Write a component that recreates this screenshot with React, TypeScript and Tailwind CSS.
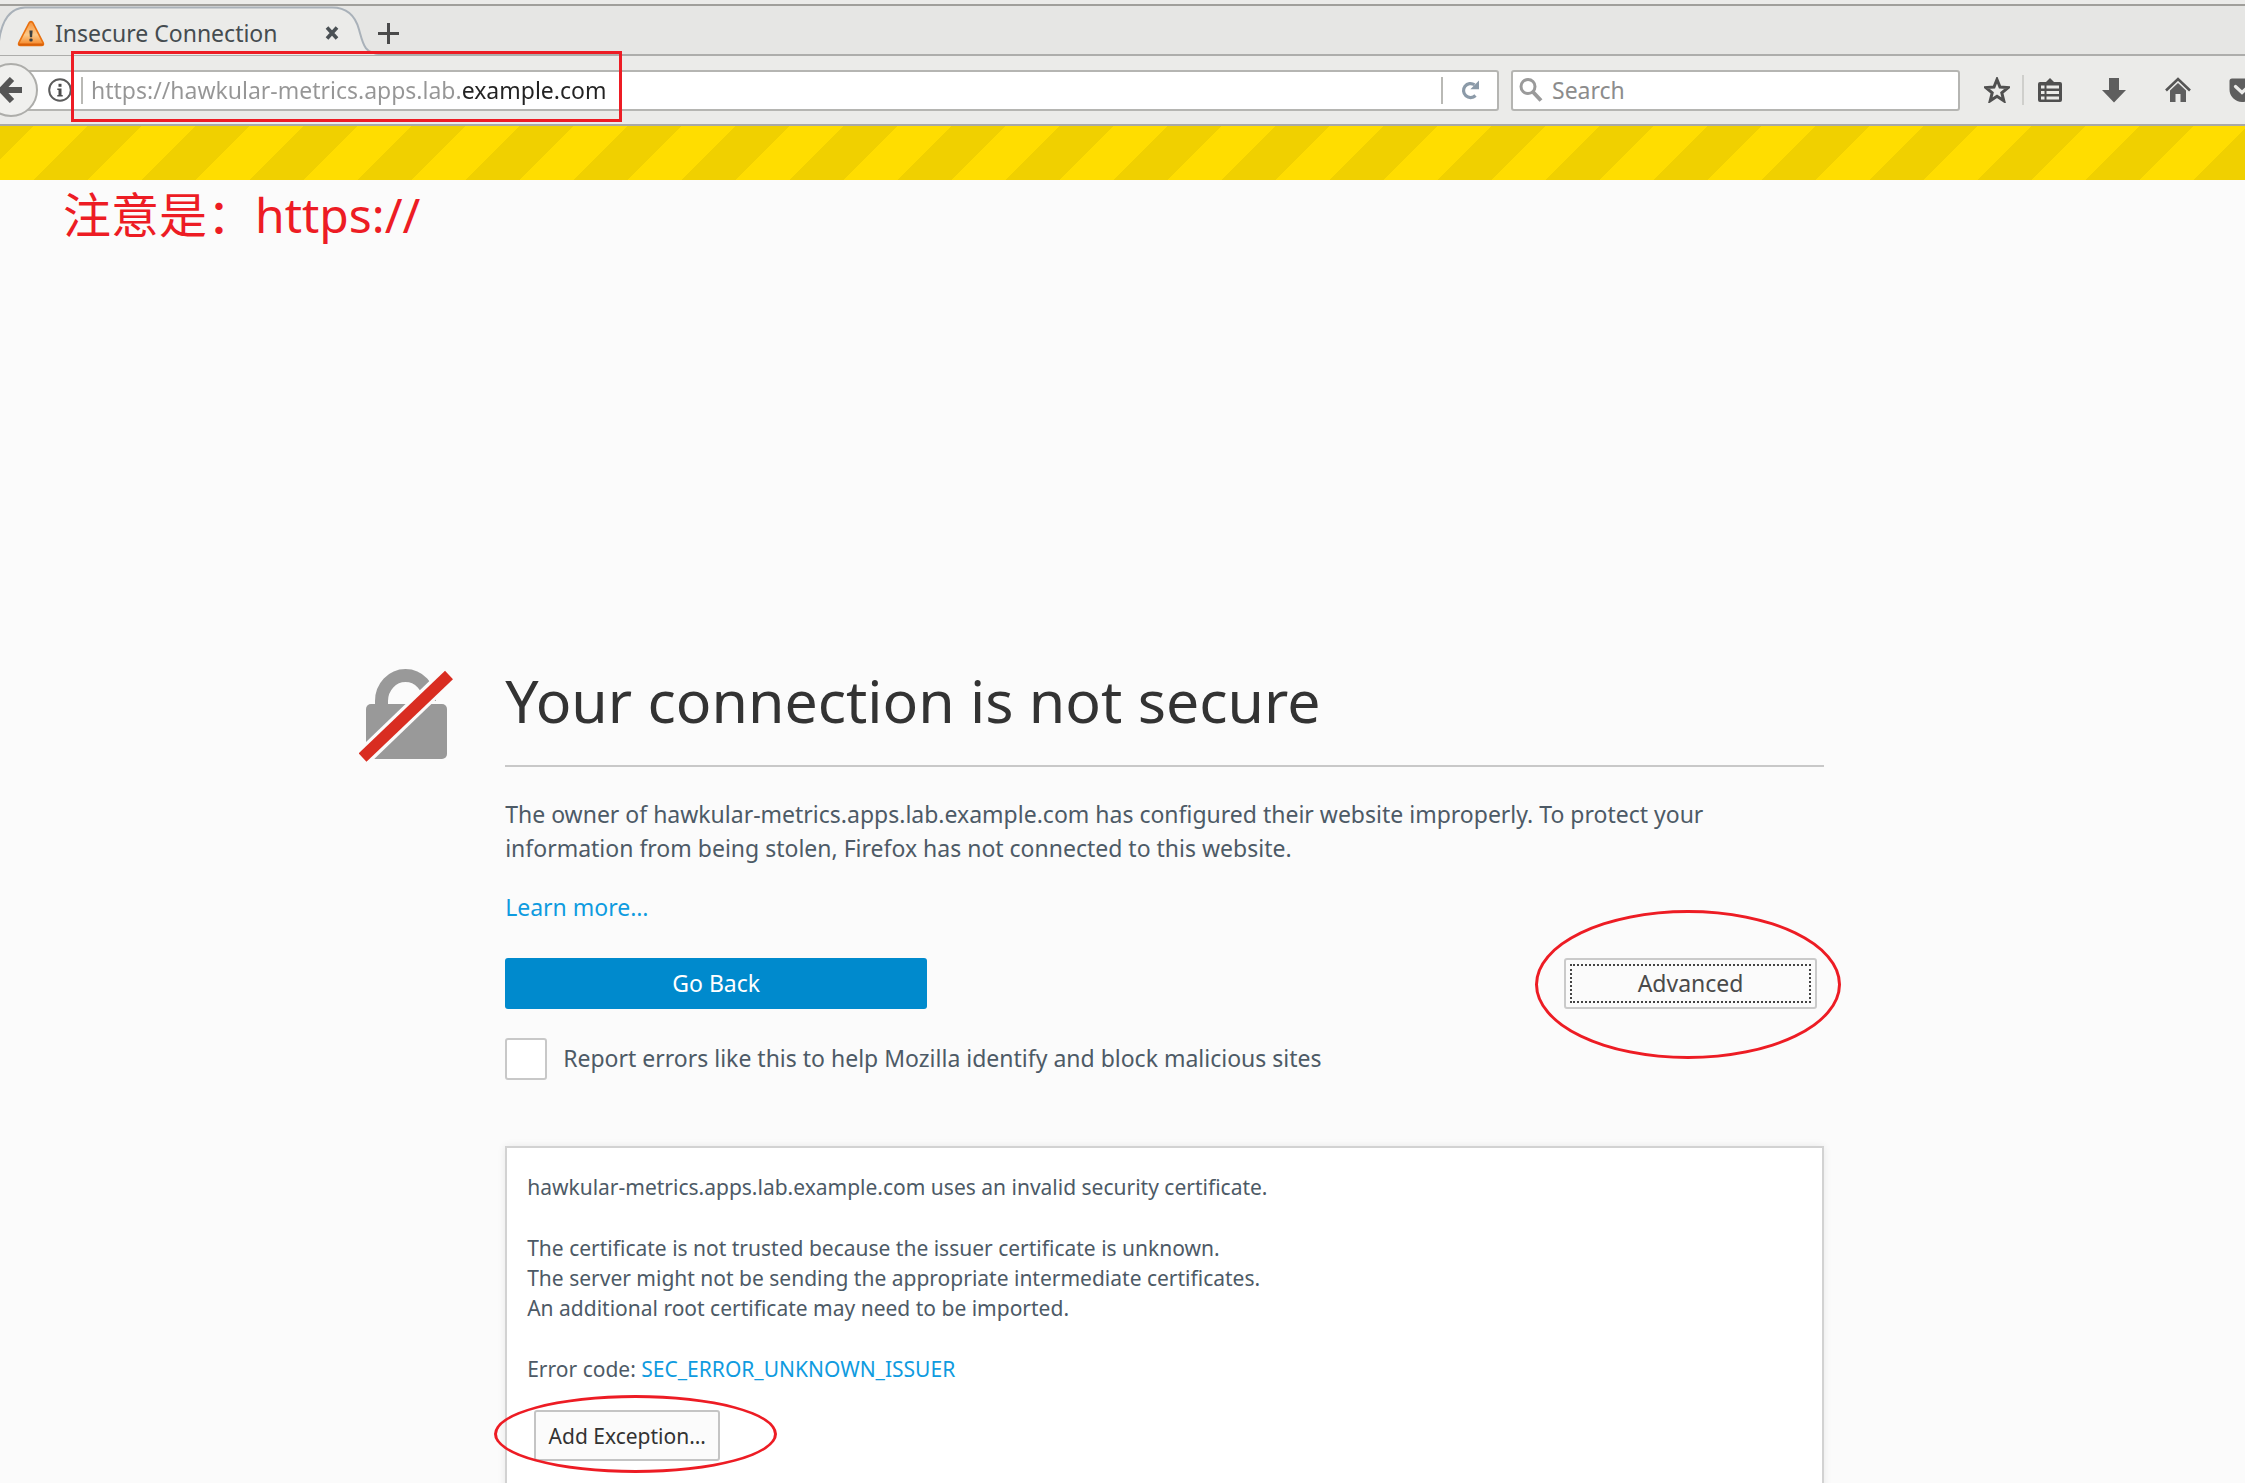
import type { ReactNode } from "react";

function Ring({ className }: { className: string }) {
  return (
    <span
      aria-hidden="true"
      className={`pointer-events-none absolute rounded-[50%] border-[3px] border-[#ed1c24] ${className}`}
    />
  );
}

function WarningIcon() {
  return (
    <svg viewBox="0 0 28 27" className="h-[27px] w-7 shrink-0" aria-hidden="true">
      <defs>
        <linearGradient id="warn" x1="0" y1="0" x2="0" y2="1">
          <stop offset="0" stopColor="#f6923a" />
          <stop offset="0.55" stopColor="#fbc98a" />
          <stop offset="1" stopColor="#f58220" />
        </linearGradient>
      </defs>
      <path
        d="M14 1.600c.9 0 1.500.5 1.900 1.300l10.300 20c.7 1.500 0 2.600-1.600 2.600H3.400c-1.600 0-2.300-1.100-1.600-2.600l10.300-20c.4-.8 1-1.300 1.900-1.300z"
        fill="url(#warn)"
        stroke="#e8700f"
        strokeWidth="1.600"
      />
      <path d="M2.500 24.500h23" stroke="#d9610a" strokeWidth="2" strokeLinecap="round" />
      <path d="M12.400 10.500h3.200l-.5 6.700h-2.200z" fill="#3b3f40" />
      <rect x="12.400" y="18.600" width="3.200" height="2.800" rx="1" fill="#3b3f40" />
    </svg>
  );
}

function TabShape() {
  return (
    <svg viewBox="0 0 380 50" className="absolute bottom-[-1px] left-0 h-[50px] w-[380px]" aria-hidden="true">
      <path
        d="M-2 50V34C1 14 10 3 25 2.500H332c14 0 23 7 27 22 4 14 4 24 21 25.500V50z"
        fill="#ebebe9"
      />
      <path
        d="M-1 36C2 14 10 3 25 2.500H332c14 0 23 7 27 22 4 14 5 24 21 24.500"
        fill="none"
        stroke="#a9b1b9"
        strokeWidth="2"
      />
    </svg>
  );
}

function ToolButton({ label, className = "", children }: { label: string; className?: string; children: ReactNode }) {
  return (
    <button type="button" aria-label={label} className={`h-[26px] w-[26px] shrink-0 ${className}`}>
      <svg viewBox="0 0 26 26" className="h-[26px] w-[26px]" aria-hidden="true">
        {children}
      </svg>
    </button>
  );
}

function TabStrip() {
  return (
    <div className="relative flex h-[50px] shrink-0 border-b-2 border-[#adadab] bg-[#e6e6e4]">
      <div className="relative z-10 flex w-[370px] items-center pl-[17px]">
        <TabShape />
        <div className="relative flex flex-1 items-center pt-[6px]">
          <WarningIcon />
          <span className="ml-[10px] flex-1 whitespace-nowrap text-[23px] leading-[30px] text-[#454c50]">
            Insecure Connection
          </span>
          <button type="button" aria-label="Close tab" className="mr-[31px] h-[14px] w-[14px]">
            <svg viewBox="0 0 14 14" className="h-[14px] w-[14px]" aria-hidden="true">
              <path d="M2 1.500l10 11M12 1.500L2 12.500" stroke="#4a5054" strokeWidth="3.600" />
            </svg>
          </button>
        </div>
      </div>
      <button type="button" aria-label="New tab" className="ml-2 flex items-center pt-[6px]">
        <svg viewBox="0 0 21 21" className="h-[21px] w-[21px]" aria-hidden="true">
          <path d="M10.500 0v21M0 10.500h21" stroke="#4a4a4a" strokeWidth="3" />
        </svg>
      </button>
    </div>
  );
}

function NavBar() {
  return (
    <div className="relative flex h-[70px] shrink-0 items-center border-b-2 border-[#a9a9a6]">
      <span aria-hidden="true" className="absolute inset-0 bg-[#ebebe9]" />
      <button
        type="button"
        aria-label="Back"
        className="relative z-10 -ml-4 flex h-[54px] w-[54px] shrink-0 items-center justify-center rounded-full border-2 border-[#adadaa] bg-[#f0f0ee]"
      >
        <svg viewBox="0 0 26 26" className="h-[26px] w-[26px]" aria-hidden="true">
          <path d="M14 2L3.500 13 14 24M4 13h20" fill="none" stroke="#555" strokeWidth="6" />
        </svg>
      </button>
      <div className="relative -ml-5 flex h-[41px] min-w-0 flex-1 items-center rounded-r-[3px] border-2 border-[#b5b5b2] bg-white">
        <button type="button" aria-label="Site information" className="ml-7 shrink-0">
          <svg viewBox="0 0 24 24" className="h-6 w-6" aria-hidden="true">
            <circle cx="12" cy="12" r="10.800" fill="none" stroke="#5c5c5c" strokeWidth="2" />
            <rect x="10.500" y="5.800" width="3" height="3" fill="#4c4c4c" />
            <path d="M9.300 10.500h4.200v6.500h1.200v1.500H9.300V17h1.200v-5H9.300z" fill="#4c4c4c" />
          </svg>
        </button>
        <span className="ml-[9px] h-[27px] w-[2px] shrink-0 bg-[#b9b9b5]" />
        <input
          aria-label="Address"
          defaultValue="https://hawkular-metrics.apps.lab.example.com"
          className="ml-2 h-[34px] min-w-0 flex-1 bg-[linear-gradient(to_right,#969696_371px,#222_371px)] bg-clip-text text-[23px] text-transparent outline-none"
        />
        <span className="h-[27px] w-[2px] shrink-0 bg-[#b9b9b5]" />
        <button type="button" aria-label="Reload" className="mx-[17px] shrink-0">
          <svg viewBox="0 0 20 20" className="h-5 w-5" aria-hidden="true">
            <path d="M15.500 15.500A7 7 0 1 1 14.500 4.800" fill="none" stroke="#8b9aa8" strokeWidth="3.200" />
            <path d="M19 .5v8.700h-8.700z" fill="#8b9aa8" />
          </svg>
        </button>
        <span
          aria-hidden="true"
          className="pointer-events-none absolute -top-[21px] left-[51px] z-20 h-[71px] w-[551px] border-[3px] border-[#ed1c24]"
        />
      </div>
      <div className="relative ml-3 flex h-[41px] w-[20%] shrink-0 items-center rounded-[3px] border-2 border-[#b5b5b2] bg-white">
        <svg viewBox="0 0 24 24" className="ml-[6px] h-6 w-6 shrink-0" aria-hidden="true">
          <circle cx="9" cy="8.500" r="7" fill="none" stroke="#9a9a9a" strokeWidth="3" />
          <path d="M13.500 13.500L22 22.500" stroke="#9a9a9a" strokeWidth="4" />
        </svg>
        <input
          aria-label="Search"
          placeholder="Search"
          className="ml-[9px] h-[34px] min-w-0 flex-1 text-[23px] outline-none placeholder:text-[#8c8c8c]"
        />
      </div>
      <div className="relative ml-6 flex w-[261px] shrink-0 items-center overflow-hidden">
        <ToolButton label="Bookmark this page">
          <path
            d="M13 2.500l3 7.500 8 .6-6.200 5.200 2 8L13 19.300 6.200 23.800l2-8L2 10.600l8-.6z"
            fill="none"
            stroke="#505050"
            strokeWidth="3"
          />
        </ToolButton>
        <span className="ml-3 h-[30px] w-[2px] shrink-0 bg-[#cfcfcc]" />
        <ToolButton label="Library" className="ml-[13px]">
          <path d="M9 5l4-4 4 4h6a2 2 0 0 1 2 2v16a2 2 0 0 1-2 2H3a2 2 0 0 1-2-2V7a2 2 0 0 1 2-2z" fill="#505050" />
          <path d="M4 8.500h3.500v3H4zM9.500 8.500H22v3H9.500zM4 14h3.500v3H4zM9.500 14H22v3H9.500zM4 19.500h3.500v3H4zM9.500 19.500H22v3H9.500z" fill="#ebebe9" />
        </ToolButton>
        <ToolButton label="Downloads" className="ml-[38px]">
          <path d="M8 1h10v12h7L13 25.500 1 13h7z" fill="#5e5e5e" />
        </ToolButton>
        <ToolButton label="Home" className="ml-[38px]">
          <path d="M1 13.500L13 2l12 11.500" fill="none" stroke="#555" strokeWidth="2.600" />
          <path d="M5 13.500L13 6l8 7.500V25h-5.500v-8h-5v8H5z" fill="#5e5e5e" />
        </ToolButton>
        <ToolButton label="Pocket" className="ml-[38px]">
          <path d="M3 1.500h20a2.500 2.500 0 0 1 2.500 2.500v8.500a12.500 12.500 0 0 1-25 0V4A2.500 2.500 0 0 1 3 1.500z" fill="#5e5e5e" />
          <path d="M6.500 9.500l6.500 6 6.500-6" fill="none" stroke="#ebebe9" strokeWidth="3.200" strokeLinecap="round" />
        </ToolButton>
      </div>
    </div>
  );
}

function BrokenLock() {
  return (
    <svg viewBox="0 0 95 95" className="mt-2 h-[95px] w-[95px] shrink-0" role="img" aria-label="Insecure">
      <path d="M22.500 42V33a24 25.500 0 0 1 48 0" fill="none" stroke="#999" strokeWidth="13" />
      <rect x="7" y="36" width="81" height="55" rx="5" fill="#999" />
      <path d="M-4 97L98 -1" stroke="#fbfbfb" strokeWidth="18" />
      <path d="M3.500 89.500L90 7" stroke="#d92d21" strokeWidth="11.500" />
    </svg>
  );
}

function CertificatePanel() {
  return (
    <section className="mt-[66px] border-2 border-[#d2d2d2] bg-white px-5 pt-6 pb-8 text-[21px] leading-[30px] shadow-[0_0_8px_rgba(0,0,0,0.08)]">
      <p>hawkular-metrics.apps.lab.example.com uses an invalid security certificate.</p>
      <p className="mt-[31px]">
        The certificate is not trusted because the issuer certificate is unknown.
        <br />
        The server might not be sending the appropriate intermediate certificates.
        <br />
        An additional root certificate may need to be imported.
      </p>
      <p className="mt-[31px]">
        Error code:{" "}
        <a href="#details" className="text-[#0f9be0]">
          SEC_ERROR_UNKNOWN_ISSUER
        </a>
      </p>
      <div className="relative mt-[26px] ml-[7px] w-fit">
        <button
          type="button"
          className="h-[51px] w-[186px] rounded-[3px] border-2 border-[#c4c4c4] bg-[#fbfbfb] text-[#333]"
        >
          Add Exception…
        </button>
        <Ring className="-top-[15px] -left-10 h-[78px] w-[283px]" />
      </div>
    </section>
  );
}

export default function App() {
  return (
    <div className="flex h-screen flex-col overflow-hidden bg-[#fbfbfb] font-['Noto_Sans','Noto_Sans_CJK_SC',sans-serif]">
      <div className="h-[6px] shrink-0 border-b-2 border-[#a09f9b] bg-[#ebebe9]" />
      <div className="isolate flex shrink-0 flex-col">
        <TabStrip />
        <NavBar />
      </div>
      <div className="h-[54px] shrink-0 bg-[linear-gradient(135deg,#ffdd00_25%,#f0d000_25%_50%,#ffdd00_50%_75%,#f0d000_75%)] bg-[length:108px_108px] bg-[position:34px_0]" />
      <p className="ml-[63px] text-5xl leading-[70px] text-[#ed1c24]">注意是：https://</p>
      <main className="mt-[410px] flex gap-[51px] pr-[18.75%] pl-[16%] text-[23px] leading-[34px] text-[#4d5a66]">
        <BrokenLock />
        <div className="min-w-0 flex-1">
          <h1 className="border-b-2 border-[#c8c8c8] pb-[25px] text-[59px] leading-[80px] text-[#333]">
            Your connection is not secure
          </h1>
          <p className="mt-[30px]">
            The owner of hawkular-metrics.apps.lab.example.com has configured their website improperly. To protect
            your information from being stolen, Firefox has not connected to this website.
          </p>
          <p className="mt-[25px]">
            <a href="#learn-more" className="text-[#0f9be0]">
              Learn more…
            </a>
          </p>
          <div className="mt-[34px] flex items-center justify-between">
            <button type="button" className="h-[51px] w-[32%] rounded-[3px] bg-[#008acd] pb-[2px] text-white">
              Go Back
            </button>
            <div className="relative mr-[7px]">
              <button
                type="button"
                className="h-[51px] w-[253px] rounded-[3px] border-2 border-[#cacaca] bg-[#fbfbfb] p-1 text-[#4a4a4a]"
              >
                <span className="flex h-full items-center justify-center border-2 border-dotted border-[#444] pb-[2px]">
                  Advanced
                </span>
              </button>
              <Ring className="-top-12 -left-[29px] h-[149px] w-[306px]" />
            </div>
          </div>
          <label className="mt-[29px] flex items-center gap-4">
            <input
              type="checkbox"
              className="h-[42px] w-[42px] shrink-0 appearance-none rounded-[3px] border-2 border-[#c8c8c8] bg-white"
            />
            <span className="pb-[2px]">Report errors like this to help Mozilla identify and block malicious sites</span>
          </label>
          <CertificatePanel />
        </div>
      </main>
    </div>
  );
}
